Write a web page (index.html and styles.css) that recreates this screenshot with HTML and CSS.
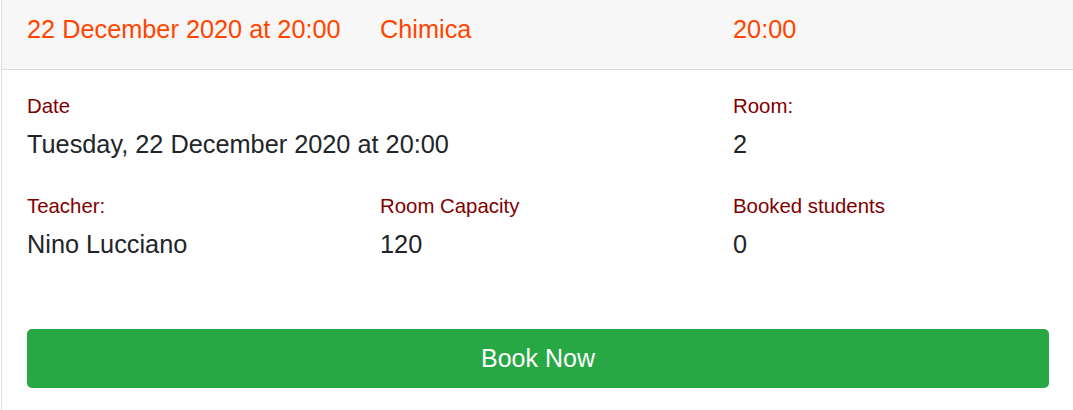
FILE: index.html
```html
<!DOCTYPE html>
<html lang="en">
<head>
<meta charset="utf-8">
<title>Lecture</title>
<link rel="stylesheet" href="styles.css">
</head>
<body>
<div class="card">
  <div class="card-header">
    <div class="col">22 December 2020 at 20:00</div>
    <div class="col">Chimica</div>
    <div class="col">20:00</div>
  </div>
  <div class="card-body">
    <div class="row">
      <div class="field wide">
        <div class="label">Date</div>
        <div class="value">Tuesday, 22 December 2020 at 20:00</div>
      </div>
      <div class="field">
        <div class="label">Room:</div>
        <div class="value">2</div>
      </div>
    </div>
    <div class="row">
      <div class="field">
        <div class="label">Teacher:</div>
        <div class="value">Nino Lucciano</div>
      </div>
      <div class="field">
        <div class="label">Room Capacity</div>
        <div class="value">120</div>
      </div>
      <div class="field">
        <div class="label">Booked students</div>
        <div class="value">0</div>
      </div>
    </div>
    <button class="btn-book" type="button">Book Now</button>
  </div>
</div>
</body>
</html>
```
FILE: styles.css
```css
html, body {
  margin: 0;
  padding: 0;
  background: #fff;
  overflow: hidden;
}
body {
  font-family: "Liberation Sans", Arial, sans-serif;
  color: #212529;
}
.card {
  box-sizing: border-box;
  width: 1074px;
  margin: -1px 0 0 1px;
  border: 1px solid #dfdfdf;
  background: #fff;
}
.card-header {
  display: grid;
  grid-template-columns: 353px 353px 1fr;
  padding: 10px 25px 21px 25px;
  background: #f7f7f7;
  border-bottom: 1px solid #dcdcdc;
  font-size: 25.3px;
  line-height: 38px;
  color: #ff4500;
}
.card-body {
  padding: 24px 25px 22px 25px;
}
.row {
  display: grid;
  grid-template-columns: 353px 353px 1fr;
  margin-bottom: 31px;
}
.row:last-of-type {
  margin-bottom: 66px;
}
.field.wide {
  grid-column: span 2;
}
.label {
  font-size: 20.4px;
  line-height: 24px;
  color: #800000;
  margin-bottom: 7px;
}
.value {
  font-size: 25.3px;
  line-height: 38px;
  color: #212529;
}
.btn-book {
  display: block;
  width: 1022px;
  margin: 0;
  padding: 10px 0 11px 0;
  border: none;
  border-radius: 5px;
  background: #28a745;
  color: #fff;
  font-family: "Liberation Sans", Arial, sans-serif;
  font-size: 25px;
  line-height: 38px;
  text-align: center;
  cursor: pointer;
}
```
